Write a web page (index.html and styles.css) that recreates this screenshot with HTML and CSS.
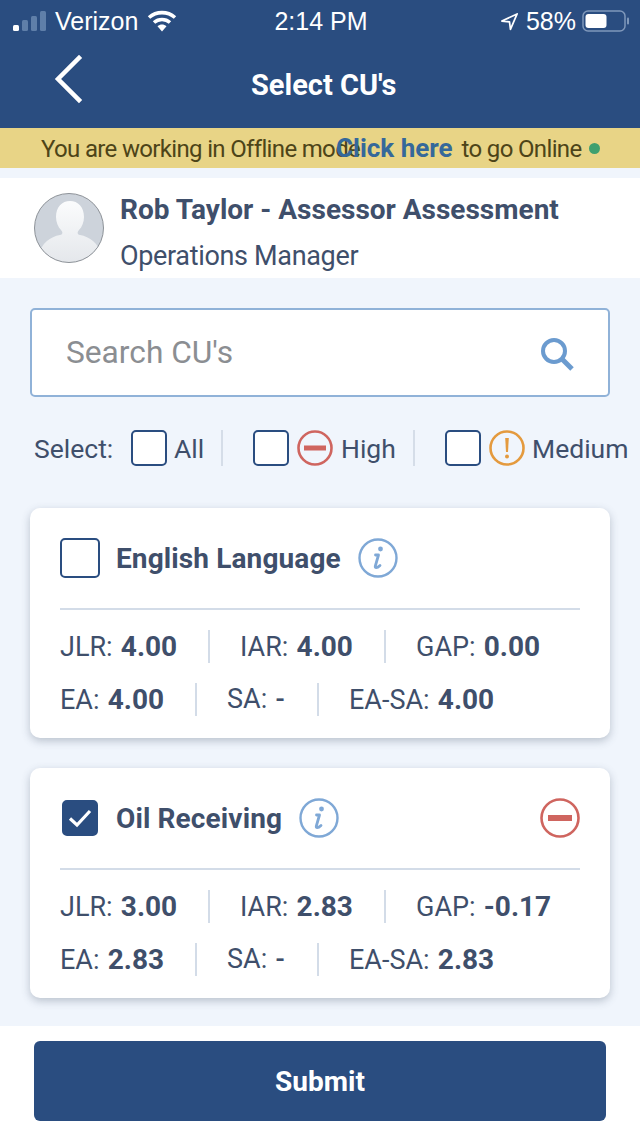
FILE: index.html
```html
<!DOCTYPE html>
<html lang="en">
<head>
<meta charset="utf-8">
<title>Select CU's</title>
<link rel="stylesheet" href="styles.css">
</head>
<body>
<div class="app">
  <header class="top">
    <div class="status">
      <div class="status-left">
        <svg class="signal" width="34" height="20" viewBox="0 0 34 20"><rect x="0" y="14" width="6" height="6" rx="1.500" fill="#fff"/><rect x="9" y="9" width="6" height="11" rx="1.500" fill="#5f7fa9"/><rect x="18" y="5" width="6" height="15" rx="1.500" fill="#5f7fa9"/><rect x="27" y="0" width="6" height="20" rx="1.500" fill="#5f7fa9"/></svg>
        <span class="carrier">Verizon</span>
        <svg class="wifi" width="30" height="22" viewBox="0 0 30 22"><path d="M2 7.500C9.500 1 20.500 1 28 7.500M7 12.500c4.600-4 11.400-4 16 0" fill="none" stroke="#fff" stroke-width="3.600"/><path d="M10.500 16.200c2.700-2.200 6.300-2.200 9 0L15 21.500z" fill="#fff"/></svg>
      </div>
      <span class="clock">2:14 PM</span>
      <div class="status-right">
        <svg class="arrow" width="19" height="19" viewBox="0 0 20 20"><path d="M18 2 2 9.500l8 .8 1 8z" fill="none" stroke="#fff" stroke-width="1.800" stroke-linejoin="round"/></svg>
        <span class="pct">58%</span>
        <svg class="battery" width="47" height="22" viewBox="0 0 47 22"><rect x="1" y="1" width="42" height="20" rx="5" fill="none" stroke="#7f98ba" stroke-width="1.500"/><rect x="3.500" y="4" width="21" height="14" rx="3" fill="#fff"/><rect x="45" y="7.500" width="2" height="7" rx="1" fill="#7f98ba"/></svg>
      </div>
    </div>
    <div class="nav">
      <svg class="back" width="30" height="50" viewBox="0 0 30 50"><path d="M26 4 5 25l21 21" fill="none" stroke="#fff" stroke-width="4.500" stroke-linecap="square"/></svg>
      <h1 class="title">Select CU's</h1>
    </div>
  </header>

  <div class="offline">
    <span class="offline-msg">You are working in Offline mode</span>
    <a class="offline-link">Click here</a>
    <span class="offline-rest">to go Online</span>
    <span class="dot"></span>
  </div>

  <section class="profile">
    <svg class="avatar" width="70" height="70" viewBox="0 0 70 70"><defs><clipPath id="av"><circle cx="35" cy="35" r="34.500"/></clipPath><linearGradient id="hd" x1="0" y1="0" x2="0" y2="1"><stop offset="0" stop-color="#fbfcfd"/><stop offset="1" stop-color="#e4e7eb"/></linearGradient></defs><g clip-path="url(#av)"><rect width="70" height="70" fill="#cdd3db"/><path d="M4 70c0-18 11-26 22-28 3-.6 3-3 1-5-3-3-5-8-5-13 0-10 6-16 14-16s14 6 14 16c0 5-2 10-5 13-2 2-2 4.400 1 5 11 2 22 10 22 28z" fill="url(#hd)"/></g><circle cx="35" cy="35" r="34.500" fill="none" stroke="#8d9298"/></svg>
    <div class="who">
      <div class="who-name">Rob Taylor - Assessor Assessment</div>
      <div class="who-role">Operations Manager</div>
    </div>
  </section>

  <main class="content">
    <div class="search">
      <span class="search-text">Search CU's</span>
      <svg class="search-icon" width="34" height="34" viewBox="0 0 34 34"><circle cx="14" cy="14" r="11" fill="none" stroke="#6b9bcf" stroke-width="4"/><path d="M22 22l10 10" stroke="#6b9bcf" stroke-width="5"/></svg>
    </div>

    <div class="filters">
      <span class="filter-label">Select:</span>
      <div class="filter filter-all"><span class="box"></span><span>All</span></div>
      <div class="filter filter-high"><span class="box"></span>
        <svg class="ic" width="36" height="36" viewBox="0 0 36 36"><circle cx="18" cy="18" r="16.500" fill="none" stroke="#cf655f" stroke-width="2.600"/><rect x="7" y="15.500" width="22" height="5" fill="#cf655f"/></svg>
        <span>High</span></div>
      <div class="filter filter-med"><span class="box"></span>
        <svg class="ic" width="36" height="36" viewBox="0 0 36 36"><circle cx="18" cy="18" r="16.500" fill="none" stroke="#e49a3e" stroke-width="2.600"/><path d="M16.200 8h3.600l-.8 14h-2z" fill="#e49a3e"/><circle cx="18" cy="26.500" r="2" fill="#e49a3e"/></svg>
        <span>Medium</span></div>
    </div>

    <article class="card">
      <div class="card-head">
        <span class="box box-lg"></span>
        <span class="card-name">English Language</span>
        <svg class="info" width="40" height="40" viewBox="0 0 40 40"><circle cx="20" cy="20" r="18.500" fill="none" stroke="#7fa8d6" stroke-width="2.400"/><circle cx="22.500" cy="11" r="2.400" fill="#7fa8d6"/><path d="M20.500 17h-3M20.500 17l-3.200 11c-.5 2 1.500 2.500 4.700-.5" fill="none" stroke="#7fa8d6" stroke-width="2.800" stroke-linecap="round"/></svg>
      </div>
      <div class="metrics">
        <div class="metric-row">
          <span class="metric m-jlr">JLR: <b>4.00</b></span>
          <span class="metric m-iar">IAR: <b>4.00</b></span>
          <span class="metric">GAP: <b>0.00</b></span>
        </div>
        <div class="metric-row">
          <span class="metric m-ea">EA: <b>4.00</b></span>
          <span class="metric m-sa">SA: <b class="dash">-</b></span>
          <span class="metric">EA-SA: <b>4.00</b></span>
        </div>
      </div>
    </article>

    <article class="card">
      <div class="card-head">
        <span class="box box-on"><svg width="24" height="20" viewBox="0 0 24 20"><path d="M2 10.500 9 17 22 3" fill="none" stroke="#fff" stroke-width="3.200"/></svg></span>
        <span class="card-name">Oil Receiving</span>
        <svg class="info" width="40" height="40" viewBox="0 0 40 40"><circle cx="20" cy="20" r="18.500" fill="none" stroke="#7fa8d6" stroke-width="2.400"/><circle cx="22.500" cy="11" r="2.400" fill="#7fa8d6"/><path d="M20.500 17h-3M20.500 17l-3.200 11c-.5 2 1.500 2.500 4.700-.5" fill="none" stroke="#7fa8d6" stroke-width="2.800" stroke-linecap="round"/></svg>
        <svg class="prio" width="40" height="40" viewBox="0 0 40 40"><circle cx="20" cy="20" r="18.500" fill="none" stroke="#cf655f" stroke-width="2.600"/><rect x="8" y="17" width="24" height="6" fill="#cf655f"/></svg>
      </div>
      <div class="metrics">
        <div class="metric-row">
          <span class="metric m-jlr">JLR: <b>3.00</b></span>
          <span class="metric m-iar">IAR: <b>2.83</b></span>
          <span class="metric">GAP: <b>-0.17</b></span>
        </div>
        <div class="metric-row">
          <span class="metric m-ea">EA: <b>2.83</b></span>
          <span class="metric m-sa">SA: <b class="dash">-</b></span>
          <span class="metric">EA-SA: <b>2.83</b></span>
        </div>
      </div>
    </article>
  </main>

  <footer class="footer">
    <button class="submit" type="button">Submit</button>
  </footer>
</div>
</body>
</html>
```
FILE: styles.css
```css
* { box-sizing: border-box; }
html, body { margin: 0; padding: 0; }
body { font-family: Roboto, "Liberation Sans", sans-serif; color: #3f4f6b; background: #fff; }
.app { width: 640px; height: 1136px; display: flex; flex-direction: column; overflow: hidden; background: #f0f5fc; }

.top { height: 128px; background: #2a4d80; color: #fff; flex: none; }
.status { height: 42px; display: grid; grid-template-columns: 1fr auto 1fr; align-items: center; padding: 0 11px 0 13px; font-family: "Liberation Sans", Arial, sans-serif; font-size: 25px; }
.status-left, .status-right { display: flex; align-items: center; }
.status-right { justify-content: flex-end; }
.signal { margin-right: 8px; }
.wifi { margin-left: 9px; }
.arrow { margin-right: 7px; }
.pct { margin-right: 6px; }
.nav { height: 86px; display: flex; align-items: center; padding: 0 0 0 53px; }
.back { flex: none; margin-top: -12px; }
.title { margin: 0 0 0 168px; font-size: 29px; font-weight: 700; line-height: 32px; }

.offline { height: 40px; flex: none; background: #e8d486; display: flex; align-items: center; padding-left: 41px; padding-top: 2px; font-size: 24px; letter-spacing: -.66px; color: #4d4418; white-space: nowrap; }
.offline-msg { width: 295px; }
.offline-link { font-size: 26px; font-weight: 700; letter-spacing: 0; color: #35689a; margin-top: -2px; }
.offline-rest { margin-left: 9px; }
.dot { width: 11px; height: 11px; border-radius: 50%; background: #3fa06f; margin-left: 8px; margin-top: -2px; }

.profile { margin-top: 10px; height: 100px; flex: none; background: #fff; display: flex; align-items: center; padding-left: 34px; }
.avatar { flex: none; }
.who { margin-left: 16px; padding-top: 10px; }
.who-name { font-size: 28px; font-weight: 700; line-height: 32px; margin-bottom: 14px; }
.who-role { font-size: 27px; letter-spacing: -.33px; line-height: 32px; }

.content { flex: 1; min-height: 0; padding: 30px 30px 0; }
.search { height: 89px; background: #fff; border: 2px solid #90b2d8; border-radius: 5px; display: flex; align-items: center; justify-content: space-between; padding: 0 34px; }
.search-text { font-size: 31.700px; color: #8b8e92; }
.search-icon { flex: none; margin-top: 2px; }

.filters { height: 36px; margin-top: 33px; display: flex; align-items: center; font-size: 26.500px; line-height: 38px; white-space: nowrap; margin-left: 4px; margin-right: -30px; }
.filter-label { width: 97px; padding-top: 2px; }
.filter { display: flex; align-items: center; gap: 8px; height: 36px; }
.filter > span:last-child { padding-top: 2px; }
.filter-all > span:last-child, .filter-med > span:last-child { margin-left: -1px; }
.filter-all { width: 92px; border-right: 2px solid #d5dde8; }
.filter-high { margin-left: 30px; width: 162px; border-right: 2px solid #d5dde8; }
.filter-med { margin-left: 30px; }
.box { width: 36px; height: 36px; border: 2px solid #2a4d80; border-radius: 5px; background: #fff; flex: none; display: flex; align-items: center; justify-content: center; }
.box-lg { width: 40px; height: 40px; }
.box-on { background: #2a4d80; margin: 2px; }

.card { height: 230px; background: #fff; border-radius: 10px; box-shadow: 0 3px 8px rgba(60, 75, 100, .3); padding: 30px 30px 0; }
.filters + .card { margin-top: 42px; }
.card + .card { margin-top: 30px; }
.card-head { height: 72px; border-bottom: 2px solid #d3dce8; display: flex; align-items: flex-start; }
.card-name { font-size: 28px; font-weight: 700; letter-spacing: .12px; line-height: 42px; margin-left: 16px; margin-right: 17px; }
.prio { margin-left: auto; }
.metrics { padding-top: 20px; }
.metric-row { display: flex; height: 33px; align-items: flex-start; font-size: 27px; white-space: nowrap; }
.metric-row + .metric-row { margin-top: 20px; }
.metric { height: 33px; line-height: 33px; display: block; }
.metric b { font-size: 28px; font-weight: 700; margin-left: 1.500px; }
.metric .dash { font-size: 27px; font-weight: 500; }
.m-jlr { width: 150px; border-right: 2px solid #d3dce8; }
.m-iar { width: 176px; border-right: 2px solid #d3dce8; padding-left: 30px; margin-right: 30px; }
.m-ea { width: 137px; border-right: 2px solid #d3dce8; margin-right: 30px; }
.m-sa { width: 92px; border-right: 2px solid #d3dce8; margin-right: 30px; }

.footer { height: 110px; flex: none; background: #fff; padding: 15px 34px 0; }
.submit { width: 572px; height: 80px; padding: 0; background: #2a4d80; color: #fff; border: 0; border-radius: 6px; font-family: Roboto, "Liberation Sans", sans-serif; font-size: 28px; font-weight: 700; }
```
